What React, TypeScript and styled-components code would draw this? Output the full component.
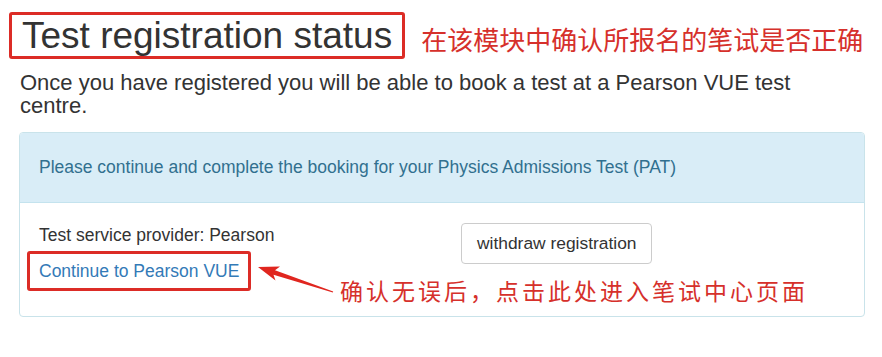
import React from 'react';
import styled, { createGlobalStyle } from 'styled-components';

const GlobalStyle = createGlobalStyle`
  html, body {
    margin: 0;
    padding: 0;
    background: #ffffff;
  }
  body {
    font-family: "Liberation Sans", Arial, "Noto Sans CJK SC", sans-serif;
    color: #333333;
  }
`;

const Page = styled.div`
  width: 882px;
  height: 357px;
  overflow: hidden;
  padding-top: 12px;
  box-sizing: border-box;
`;

const TitleRow = styled.div`
  display: flex;
  align-items: center;
  margin-left: 9px;
`;

const TitleBox = styled.div`
  border: 3px solid #dc2c26;
  border-radius: 3px;
  padding: 0 10px;
`;

const Title = styled.h1`
  margin: 0;
  font-size: 37px;
  line-height: 41px;
  font-weight: 400;
  color: #333333;
`;

const Note = styled.span<{ $size: number; $spacing?: number }>`
  font-family: "Noto Sans CJK SC", "Liberation Sans", sans-serif;
  font-size: ${(p) => p.$size}px;
  letter-spacing: ${(p) => p.$spacing ?? 0}px;
  line-height: 1;
  color: #d6302b;
  white-space: nowrap;
`;

const TitleNote = styled(Note)`
  margin-left: 16px;
  margin-top: 6px;
`;

const Intro = styled.p`
  margin: 12px 40px 0 20px;
  font-size: 22px;
  line-height: 23px;
  color: #333333;
`;

const Panel = styled.div`
  margin: 15px 17px 0 19px;
  border: 1px solid #c9e3ea;
  border-radius: 4px;
  overflow: hidden;
`;

const PanelHeading = styled.div`
  height: 69px;
  display: flex;
  align-items: center;
  padding: 0 19px;
  background: #d9edf7;
  border-bottom: 1px solid #c4e3ee;
  color: #31708f;
  font-size: 17.5px;
`;

const PanelBody = styled.div`
  position: relative;
  display: grid;
  grid-template-columns: 422px auto;
  padding: 20px 19px 25px;
`;

const Column = styled.div`
  display: flex;
  flex-direction: column;
  align-items: flex-start;
`;

const Provider = styled.div`
  font-size: 17.5px;
  line-height: 24px;
`;

const LinkBox = styled.div`
  margin: 4px 0 0 -12px;
  padding: 5px 9px;
  border: 3px solid #dc2c26;
  border-radius: 3px;
`;

const Link = styled.a`
  display: block;
  font-size: 17.5px;
  line-height: 24px;
  color: #337ab7;
  text-decoration: none;
`;

const Button = styled.button`
  font-family: "Liberation Sans", Arial, sans-serif;
  font-size: 17.4px;
  line-height: 25px;
  padding: 7px 15px;
  color: #333333;
  background: #ffffff;
  border: 1px solid #cccccc;
  border-radius: 4px;
`;

const ArrowNote = styled(Note)`
  position: absolute;
  left: 320px;
  top: 76px;
`;

const Arrow = styled.svg`
  position: absolute;
  left: 230px;
  top: 51px;
`;

export default function App() {
  return (
    <Page>
      <GlobalStyle />
      <TitleRow>
        <TitleBox>
          <Title>Test registration status</Title>
        </TitleBox>
        <TitleNote $size={26}>在该模块中确认所报名的笔试是否正确</TitleNote>
      </TitleRow>
      <Intro>
        Once you have registered you will be able to book a test at a Pearson VUE test centre.
      </Intro>
      <Panel>
        <PanelHeading>
          Please continue and complete the booking for your Physics Admissions Test (PAT)
        </PanelHeading>
        <PanelBody>
          <Column>
            <Provider>Test service provider: Pearson</Provider>
            <LinkBox>
              <Link href="#">Continue to Pearson VUE</Link>
            </LinkBox>
          </Column>
          <Column>
            <Button type="button">withdraw registration</Button>
          </Column>
          <Arrow width="90" height="45" viewBox="0 0 90 45">
            <polygon
              points="8,13 30,12.5 25,16.3 83.2,37.5 82.8,38.5 23.5,20.8 25.5,26.5"
              fill="#e0261f"
            />
          </Arrow>
          <ArrowNote $size={23} $spacing={3}>确认无误后，点击此处进入笔试中心页面</ArrowNote>
        </PanelBody>
      </Panel>
    </Page>
  );
}
